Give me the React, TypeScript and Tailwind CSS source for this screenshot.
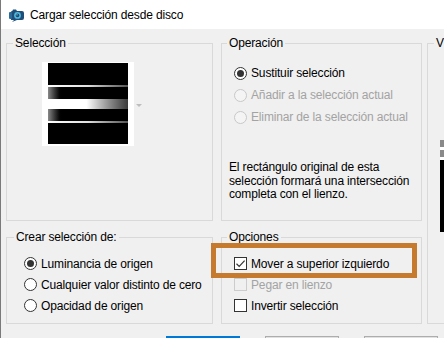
import clsx from "clsx";

const font = "font-['Liberation_Sans',Arial,sans-serif] text-[12px] tracking-[-0.15px]";

function Radio({ label, checked = false, disabled = false }: { label: string; checked?: boolean; disabled?: boolean }) {
  return (
    <div className="flex h-[21px] items-center gap-[4px]">
      <span
        className={clsx(
          "flex h-[13px] w-[13px] shrink-0 items-center justify-center rounded-full border",
          disabled ? "border-[#c8c8c8] bg-[#f4f4f4]" : "border-[#333333] bg-white"
        )}
      >
        {checked && <span className="h-[7px] w-[7px] rounded-full bg-[#333333]" />}
      </span>
      <span className={disabled ? "text-[#a3a3a3]" : "text-black"}>{label}</span>
    </div>
  );
}

function Check({ label, checked = false, disabled = false }: { label: string; checked?: boolean; disabled?: boolean }) {
  return (
    <div className="flex h-[21px] items-center gap-[4px]">
      <span
        className={clsx(
          "flex h-[13px] w-[13px] shrink-0 items-center justify-center border",
          disabled ? "border-[#cccccc] bg-[#f0f0f0]" : "border-[#333333] bg-white"
        )}
      >
        {checked && (
          <svg width="11" height="11" viewBox="0 0 11 11" fill="none">
            <path d="M1.5 5.8 L4.2 8.4 L9.6 2.6" stroke="#333333" strokeWidth="1.2" />
          </svg>
        )}
      </span>
      <span className={disabled ? "text-[#a3a3a3]" : "text-black"}>{label}</span>
    </div>
  );
}

function Group({ title, className, legendClass, children }: { title: string; className: string; legendClass: string; children?: React.ReactNode }) {
  return (
    <fieldset className={clsx("shrink-0 border border-[#d9d9d9] p-0", className)}>
      <legend className={clsx("px-[2px] leading-[16px] whitespace-nowrap text-black", legendClass)}>{title}</legend>
      {children}
    </fieldset>
  );
}

function TitleIcon() {
  return (
    <svg width="17" height="14" viewBox="0 0 17 14">
      <path d="M3 4 L3 12 L6 12 L4 14 L9 12 L14 12 Q16 12 16 10 L16 5 Q16 3 14 3 L9 3 L8 1.5 L5 1.5 L4.3 3 Q3 3 3 4 Z" fill="#1f4f78" />
      <rect x="1" y="4" width="3" height="7" rx="1" fill="#2d6b98" />
      <circle cx="9.5" cy="7.4" r="3.4" fill="#4fb9de" />
      <circle cx="9.5" cy="7.4" r="1.8" fill="#1b4a70" />
      <circle cx="9" cy="6.8" r="0.6" fill="#bfe9f7" />
    </svg>
  );
}

function Preview() {
  return (
    <div className="flex items-center">
      <div className="bg-white pt-[1px] pr-[6px] pb-[2px] pl-[6px]">
        <div className="flex w-[80px] flex-col bg-black">
          <div className="h-[22px]" />
          <div className="h-[2px] bg-gradient-to-r from-white via-[#e0e0e0] to-[#555555]" />
          <div className="h-[12px] bg-gradient-to-r from-[#8a8a8a] via-black via-[18%] to-black" />
          <div className="h-[10px] bg-gradient-to-r from-white via-white via-[48%] to-[#3a3a3a]" />
          <div className="h-[12px] bg-gradient-to-r from-[#8a8a8a] via-black via-[18%] to-black" />
          <div className="h-[2px] bg-gradient-to-r from-white via-[#e0e0e0] to-[#555555]" />
          <div className="h-[21px]" />
        </div>
      </div>
      <span className="ml-[2px] mt-[2px] h-0 w-0 border-x-[3px] border-t-[3px] border-x-transparent border-t-[#bdbdbd]" />
    </div>
  );
}

export default function App() {
  return (
    <div className={clsx("relative h-[338px] w-[444px] overflow-hidden border-l border-[#7a7a7a] bg-[#f0f0f0]", font)}>
      {/* title bar */}
      <div className="flex h-[29px] items-center bg-white pl-[7px]">
        <TitleIcon />
        <span className="ml-[5px] text-black">Cargar selección desde disco</span>
      </div>

      <div className="flex pl-[5px] pt-[6px]">
        <div className="flex w-[207px] shrink-0 flex-col gap-[8px]">
          <Group title="Selección" className="h-[186px] w-[207px]" legendClass="ml-[6px]">
            <div className="ml-[35px] mt-[11px]">
              <Preview />
            </div>
          </Group>
          <Group title="Crear selección de:" className="h-[95px] w-[207px]" legendClass="ml-[7px]">
            <div className="ml-[17px] mt-[8px] flex flex-col">
              <Radio label="Luminancia de origen" checked />
              <Radio label="Cualquier valor distinto de cero" />
              <Radio label="Opacidad de origen" />
            </div>
          </Group>
        </div>

        <div className="ml-[8px] flex w-[201px] shrink-0 flex-col gap-[8px]">
          <Group title="Operación" className="h-[186px] w-[201px]" legendClass="ml-[5px]">
            <div className="ml-[12px] mt-[11px] flex flex-col [&>div]:h-[22px]">
              <Radio label="Sustituir selección" checked />
              <Radio label="Añadir a la selección actual" disabled />
              <Radio label="Eliminar de la selección actual" disabled />
            </div>
            <p className="ml-[7px] mt-[33px] leading-[13.5px] text-black">
              El rectángulo original de esta
              <br />
              selección formará una intersección
              <br />
              completa con el lienzo.
            </p>
          </Group>
          <Group title="Opciones" className="h-[95px] w-[201px]" legendClass="ml-[5px]">
            <div className="ml-[12px] mt-[8px] flex flex-col">
              <Check label="Mover a superior izquierdo" checked />
              <Check label="Pegar en lienzo" disabled />
              <Check label="Invertir selección" />
            </div>
          </Group>
        </div>

        <Group title="V" className="ml-[5px] h-[289px] w-[60px]" legendClass="ml-[6px]">
          <div className="ml-[12px] mt-[89px] flex w-[40px] flex-col">
            <div className="h-[7px] bg-[#8a8a8a]" />
            <div className="h-[3px] bg-white" />
            <div className="h-[7px] bg-[#8a8a8a]" />
            <div className="h-[3px] bg-white" />
            <div className="h-[72px] bg-black" />
          </div>
        </Group>
      </div>

      {/* dialog buttons */}
      <div className="ml-[165px] mt-[12px] flex gap-[25px]">
        <button className="h-[23px] w-[74px] border-2 border-[#0078d7] bg-[#e1e1e1]" />
        <button className="h-[23px] w-[74px] border border-[#adadad] bg-[#e1e1e1]" />
        <button className="h-[23px] w-[74px] border border-[#adadad] bg-[#e1e1e1]" />
      </div>

      {/* highlight annotation */}
      <div className="absolute left-[210px] top-[243px] h-[35px] w-[206px] border-[5px] border-[#c67a2e]" />
    </div>
  );
}
